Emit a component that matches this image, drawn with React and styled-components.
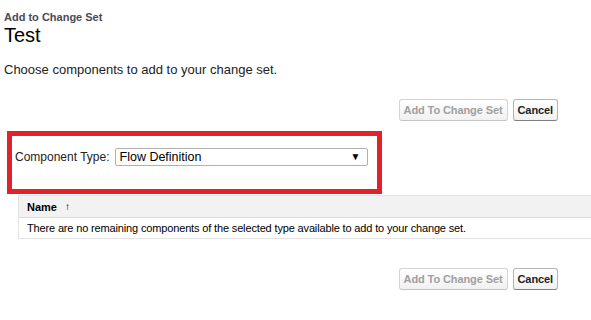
import styled, { createGlobalStyle } from 'styled-components';

const GlobalStyle = createGlobalStyle`
  html, body {
    margin: 0;
    padding: 0;
    background: #ffffff;
    font-family: "Liberation Sans", Arial, sans-serif;
    color: #000000;
    overflow: hidden;
  }
`;

const Page = styled.div`
  width: 591px;
  height: 320px;
  padding: 11px 0 0 4px;
  box-sizing: border-box;
`;

const Subtitle = styled.div`
  font-size: 11px;
  line-height: 13px;
  font-weight: 700;
  color: #4a4a56;
`;

const Title = styled.h1`
  margin: 0;
  font-size: 20px;
  line-height: 22px;
  font-weight: 400;
  color: #000000;
`;

const Instruction = styled.p`
  margin: 16px 0 0;
  font-size: 13px;
  line-height: 15px;
  color: #222222;
`;

const ButtonRow = styled.div`
  display: flex;
  justify-content: flex-end;
  gap: 5px;
  padding-right: 33px;
  margin-top: ${({ $top }) => $top}px;
`;

const Button = styled.button`
  height: 22px;
  padding: 0 4px;
  font-family: "Liberation Sans", Arial, sans-serif;
  font-size: 11px;
  letter-spacing: -0.1px;
  font-weight: 700;
  color: ${({ disabled }) => (disabled ? '#a0a0a0' : '#222222')};
  background: linear-gradient(#ffffff, #f1f1f1);
  border: 1px solid ${({ disabled }) => (disabled ? '#d4d4d4' : '#b5b5b5')};
  border-bottom-color: ${({ disabled }) => (disabled ? '#c4c4c4' : '#7f7f7f')};
  border-radius: 3px;
  cursor: ${({ disabled }) => (disabled ? 'default' : 'pointer')};
`;

const Highlight = styled.div`
  margin: 10px 0 0 3px;
  width: 375px;
  height: 63px;
  box-sizing: border-box;
  border: 5px solid #e2222b;
  padding: 12px 0 0 3px;
`;

const Field = styled.div`
  display: flex;
  align-items: center;
  gap: 5px;
`;

const Label = styled.label`
  font-size: 12px;
  color: #222222;
`;

const Select = styled.div`
  width: 253px;
  height: 18px;
  box-sizing: border-box;
  border: 1px solid #b0b0b0;
  border-radius: 2px;
  display: flex;
  align-items: center;
  justify-content: space-between;
  padding: 0 6px 0 4px;
  font-size: 12.5px;
  color: #000000;
`;

const Arrow = styled.span`
  font-size: 10px;
  line-height: 1;
`;

const Table = styled.div`
  margin: 1px 0 0 14px;
  border-left: 1px solid #e3e3e3;
  border-top: 1px solid #e3e3e3;
`;

const HeaderRow = styled.div`
  height: 21px;
  display: flex;
  align-items: center;
  padding-left: 8px;
  background: #f2f2f2;
  border-bottom: 1px solid #dcdcdc;
  font-size: 11px;
  font-weight: 700;
  color: #000000;
`;

const SortMark = styled.span`
  margin-left: 8px;
  font-size: 10px;
  font-weight: 400;
`;

const BodyRow = styled.div`
  height: 20px;
  display: flex;
  align-items: center;
  padding-left: 8px;
  border-bottom: 1px solid #e3e3e3;
  font-size: 11px;
  letter-spacing: -0.15px;
  color: #000000;
`;

const App = () => {
  return (
    <>
      <GlobalStyle />
      <Page>
        <Subtitle>Add to Change Set</Subtitle>
        <Title>Test</Title>
        <Instruction>Choose components to add to your change set.</Instruction>

        <ButtonRow $top={22}>
          <Button disabled>Add To Change Set</Button>
          <Button>Cancel</Button>
        </ButtonRow>

        <Highlight>
          <Field>
            <Label>Component Type:</Label>
            <Select>
              <span>Flow Definition</span>
              <Arrow>▼</Arrow>
            </Select>
          </Field>
        </Highlight>

        <Table>
          <HeaderRow>
            Name<SortMark>↑</SortMark>
          </HeaderRow>
          <BodyRow>
            There are no remaining components of the selected type available to add to your change set.
          </BodyRow>
        </Table>

        <ButtonRow $top={29}>
          <Button disabled>Add To Change Set</Button>
          <Button>Cancel</Button>
        </ButtonRow>
      </Page>
    </>
  );
};

export default App;
